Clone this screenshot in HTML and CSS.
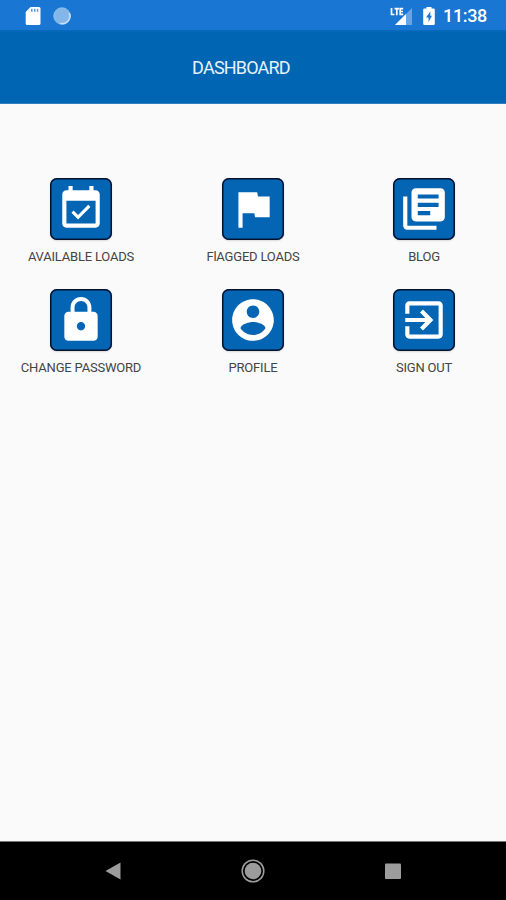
FILE: index.html
```html
<!DOCTYPE html>
<html lang="en">
<head>
<meta charset="utf-8">
<title>Dashboard</title>
<link rel="stylesheet" href="styles.css">
</head>
<body>
<div class="status">
  <svg class="sd" viewBox="0 0 16 20"><path fill="#fff" d="M5.500 1H14q1.500 0 1.500 1.500V17.500Q15.500 19 14 19H2.200Q.7 19 .7 17.500V6z"/><path stroke="#5c9bdc" stroke-width="3" d="M6 4.300h1.600M9 4.300h1.500M11.800 4.300h1.500"/></svg>
  <svg class="sync" viewBox="0 0 18 18"><circle cx="9" cy="9" r="8.300" fill="#84b7e9"/><path d="M16.300 6A7.700 7.700 0 0 1 7 16.400" fill="none" stroke="#dcecfb" stroke-width="1.500"/><circle cx="9" cy="9" r="8.300" fill="none" stroke="#a3caf0" stroke-width=".7"/></svg>
  <svg class="signal" viewBox="0 0 23 20"><path fill="#69a5e2" d="M22 2v17H5z"/><path fill="#fff" d="M16 8v11H5z"/><path d="M1.500 2v6.500h3M4.500 2.700h4.500M6.800 2.700v6.500M13.200 2.700h-3v5.600h3M10.300 5.500h2.700" fill="none" stroke="#fff" stroke-width="1.700"/></svg>
  <svg class="battery" viewBox="0 0 12 20"><path fill="#fff" d="M3.500 1h5v1.500h2q1.300 0 1.300 1.300v13.900q0 1.300-1.300 1.300h-9Q.2 19 .2 17.700V3.800q0-1.300 1.300-1.300h2z"/><path fill="#1976d2" d="M7.300 5.500 3 11.500h2.500V16L9 9.800H7.300z"/></svg>
  <span class="time">11:38</span>
</div>
<header class="bar">DASHBOARD</header>
<main class="grid">
  <div class="item"><div class="tile"><svg viewBox="0 0 24 24"><path d="M16.530 11.060L15.470 10l-4.880 4.880-2.120-2.120-1.060 1.060L10.590 17l5.940-5.940zM19 3h-1V1h-2v2H8V1H6v2H5c-1.110 0-1.990.9-1.990 2L3 19c0 1.100.89 2 2 2h14c1.100 0 2-.9 2-2V5c0-1.100-.9-2-2-2zm0 16H5V8h14v11z"/></svg></div><span class="label">AVAILABLE LOADS</span></div>
  <div class="item"><div class="tile"><svg viewBox="0 0 24 24"><path d="M14.400 6L14 4H5v17h2v-7h5.600l.4 2h7V6z"/></svg></div><span class="label">FlAGGED LOADS</span></div>
  <div class="item"><div class="tile"><svg viewBox="0 0 24 24"><path d="M4 6H2v14c0 1.100.9 2 2 2h14v-2H4V6zm16-4H8c-1.100 0-2 .9-2 2v12c0 1.100.9 2 2 2h12c1.100 0 2-.9 2-2V4c0-1.100-.9-2-2-2zm-1 9H9V9h10v2zm-4 4H9v-2h6v2zm4-8H9V5h10v2z"/></svg></div><span class="label">BLOG</span></div>
  <div class="item"><div class="tile"><svg viewBox="0 0 24 24"><path d="M18 8h-1V6c0-2.760-2.240-5-5-5S7 3.240 7 6v2H6c-1.100 0-2 .9-2 2v10c0 1.100.9 2 2 2h12c1.100 0 2-.9 2-2V10c0-1.100-.9-2-2-2zm-6 9c-1.100 0-2-.9-2-2s.9-2 2-2 2 .9 2 2-.9 2-2 2zm3.100-9H8.900V6c0-1.710 1.390-3.100 3.100-3.100 1.710 0 3.100 1.390 3.100 3.100v2z"/></svg></div><span class="label">CHANGE PASSWORD</span></div>
  <div class="item"><div class="tile"><svg viewBox="0 0 24 24"><path d="M12 2C6.480 2 2 6.480 2 12s4.480 10 10 10 10-4.480 10-10S17.520 2 12 2zm0 3c1.660 0 3 1.340 3 3s-1.340 3-3 3-3-1.340-3-3 1.340-3 3-3zm0 14.200c-2.500 0-4.710-1.280-6-3.220.03-1.990 4-3.080 6-3.080 1.990 0 5.970 1.090 6 3.080-1.290 1.940-3.500 3.220-6 3.220z"/></svg></div><span class="label">PROFILE</span></div>
  <div class="item"><div class="tile"><svg viewBox="0 0 24 24"><path d="M10.090 15.590L11.500 17l5-5-5-5-1.410 1.410L12.670 11H3v2h9.670l-2.580 2.590zM19 3H5c-1.110 0-2 .9-2 2v4h2V5h14v14H5v-4H3v4c0 1.100.89 2 2 2h14c1.100 0 2-.9 2-2V5c0-1.100-.9-2-2-2z"/></svg></div><span class="label">SIGN OUT</span></div>
</main>
<nav class="nav">
  <svg viewBox="0 0 24 24"><path fill="#9c9c9c" d="M4.500 12 19.500 3.500v17z"/></svg>
  <svg viewBox="0 0 24 24"><circle cx="12" cy="12" r="8.300" fill="#9c9c9c"/><circle cx="12" cy="12" r="10.800" fill="none" stroke="#9c9c9c" stroke-width="1.500"/></svg>
  <svg viewBox="0 0 24 24"><rect x="4" y="4.500" width="16" height="15.500" rx="1" fill="#9c9c9c"/></svg>
</nav>
</body>
</html>
```
FILE: styles.css
```css
* { box-sizing: border-box; }
body {
  margin: 0;
  height: 900px;
  display: flex;
  flex-direction: column;
  background: #fafafa;
  font-family: Roboto, "Liberation Sans", sans-serif;
  overflow: hidden;
}
svg { display: block; flex: none; }
.status {
  height: 30px;
  display: flex;
  align-items: center;
  padding: 1px 18px 0 25px;
  background: #1976d2;
  color: #fff;
}
.sd { width: 16px; height: 20px; margin-right: 12px; }
.sync { width: 18px; height: 18px; }
.signal { width: 23px; height: 20px; margin-left: auto; margin-right: 10px; }
.battery { width: 12px; height: 20px; margin-right: 8px; }
.time {
  font-size: 18px;
  font-weight: 500;
  line-height: 20px;
  letter-spacing: -0.35px;
  width: 45px;
  white-space: nowrap;
}
.bar {
  height: 74px;
  display: flex;
  align-items: center;
  justify-content: center;
  padding: 2px 24px 0 0;
  background: linear-gradient(#0a69bd, #0065b3 3px);
  border-bottom: 1px solid #2f7fc2;
  color: #e9f1fa;
  font-size: 18px;
  letter-spacing: -0.8px;
}
.grid {
  flex: 1;
  display: grid;
  grid-template-columns: 162px 182px 160px;
  grid-auto-rows: 111px;
  padding-top: 74px;
}
.item { display: flex; flex-direction: column; align-items: center; }
.tile {
  width: 62px;
  height: 62px;
  display: flex;
  align-items: center;
  justify-content: center;
  border-radius: 7px;
  background: #0465b4;
  box-shadow: inset 0 0 0 1.5px #04122e, 0 1px 2px #0002;
}
.tile svg { width: 50px; height: 50px; fill: #fff; }
.label {
  margin-top: 8px;
  font-size: 13px;
  line-height: 17px;
  letter-spacing: -0.2px;
  color: #444;
  white-space: nowrap;
}
.nav {
  height: 59px;
  display: flex;
  align-items: center;
  justify-content: space-between;
  padding: 0 101px;
  background: #000;
  border-top: 1px solid #777;
}
.nav svg { width: 24px; height: 24px; }
```
